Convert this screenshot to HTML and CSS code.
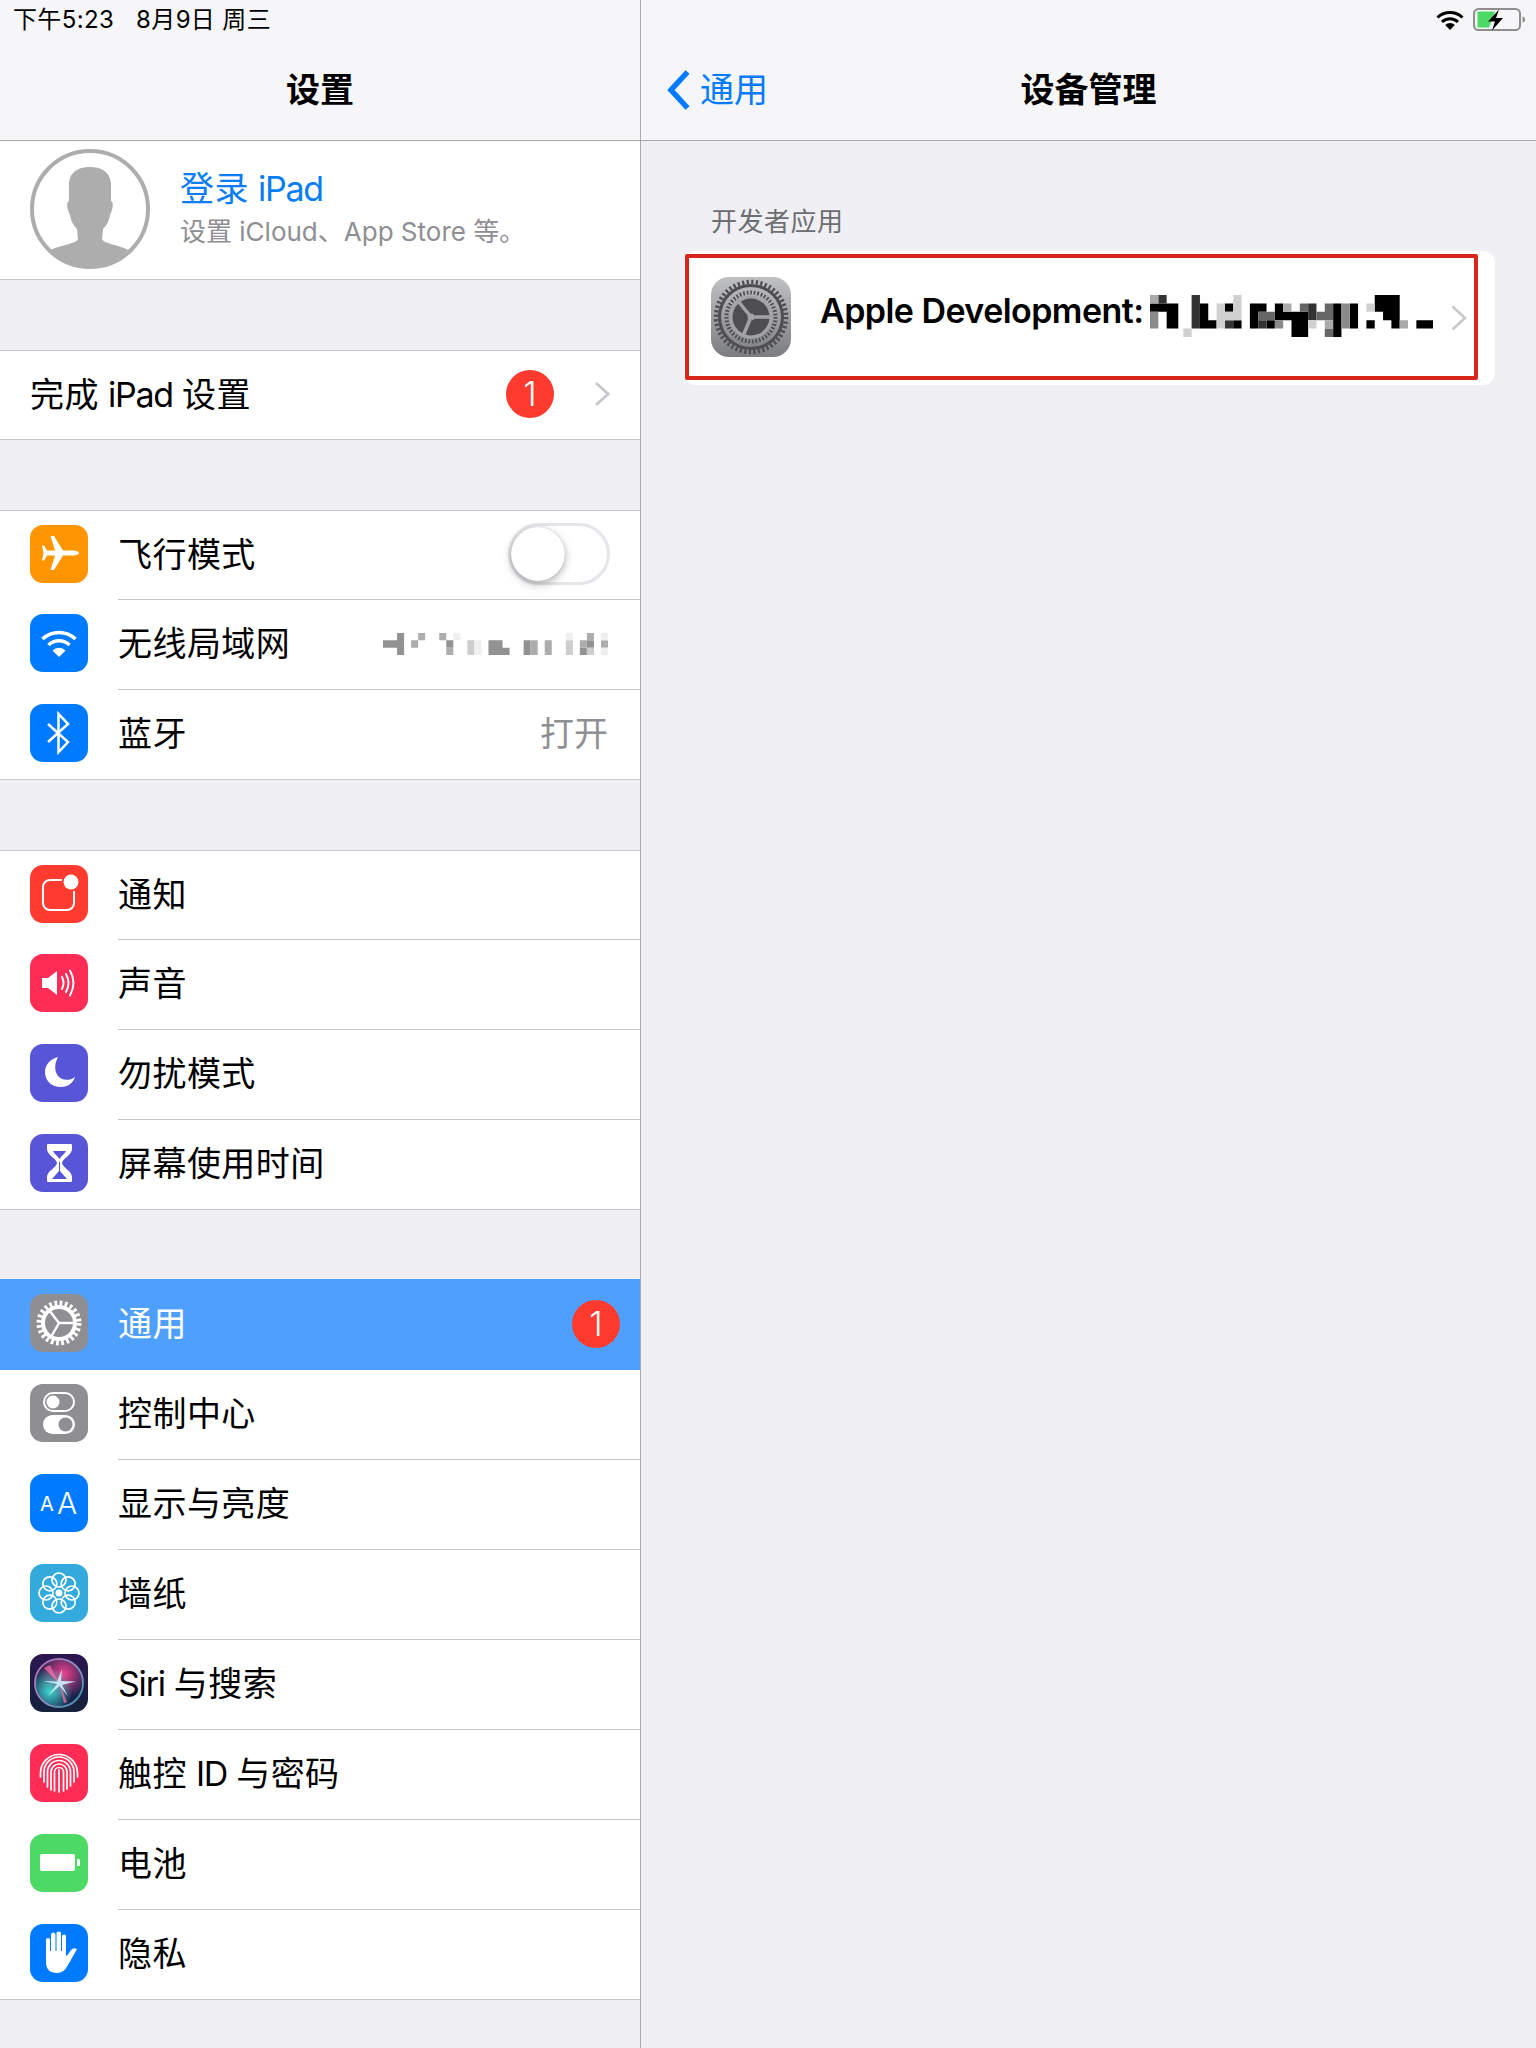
FILE: index.html
```html
<!DOCTYPE html>
<html lang="zh-CN">
<head>
    <meta charset="UTF-8">
    <title>设备管理</title>
    <link rel="stylesheet" href="styles.css">
</head>
<body>
<div class="ipad">
    <svg width="0" height="0" class="defs">
        <defs>
            <linearGradient id="gearBg" x1="0" y1="0" x2="0" y2="1">
                <stop offset="0" stop-color="#c0c1c3"/>
                <stop offset="1" stop-color="#7b7d80"/>
            </linearGradient>
            <linearGradient id="siriBg" x1="0" y1="0" x2="0" y2="1">
                <stop offset="0" stop-color="#2b1650"/>
                <stop offset="1" stop-color="#14223c"/>
            </linearGradient>
            <linearGradient id="siriRing" x1="0" y1="0" x2="1" y2="1">
                <stop offset="0" stop-color="#b35fb0"/>
                <stop offset="0.5" stop-color="#8f8fc0"/>
                <stop offset="1" stop-color="#2f8e9e"/>
            </linearGradient>
            <radialGradient id="siriPink" cx="0.6" cy="0.3" r="0.55">
                <stop offset="0" stop-color="#f0408f"/>
                <stop offset="1" stop-color="#f0408f" stop-opacity="0"/>
            </radialGradient>
            <radialGradient id="siriCyan" cx="0.3" cy="0.68" r="0.5">
                <stop offset="0" stop-color="#3fd6d0"/>
                <stop offset="1" stop-color="#3fd6d0" stop-opacity="0"/>
            </radialGradient>
        </defs>
    </svg>

    <!-- left column -->
    <aside class="sidebar">
        <header class="nav">
            <div class="status">
                <span>下午5:23</span>
                <span>8月9日 周三</span>
            </div>
            <div class="nav-bar">
                <span></span>
                <h1>设置</h1>
                <span></span>
            </div>
        </header>

        <section class="profile">
            <svg class="avatar" width="120" height="120" viewBox="0 0 120 120">
                <circle cx="60" cy="60" r="58" fill="#fff" stroke="#adadad" stroke-width="4"/>
                <path fill="#adadad" d="M60 18C70 18 81 22 81 36L81 52C84 53 83 60 80 66C79 72 77 76 73 80L72 90C74 95 90 96 98 101C88 112 74 119 60 119C46 119 32 112 21 101C30 96 46 95 48 90L47 80C43 76 41 72 40 66C37 60 36 53 39 52L39 36C39 22 50 18 60 18Z"/>
            </svg>
            <div class="profile-text">
                <div class="profile-name">登录 <span class="latin">iPad</span></div>
                <div class="profile-sub">设置 iCloud、App Store 等。</div>
            </div>
        </section>

        <section class="group">
            <div class="row">
                <div class="row-body no-icon">
                    <span class="label">完成 <span class="latin">iPad</span> 设置</span>
                    <span class="badge">1</span>
                    <svg class="chevron" width="16" height="26" viewBox="0 0 16 26"><path d="M2 2L14 13L2 24" fill="none" stroke="#c7c7cc" stroke-width="3"/></svg>
                </div>
            </div>
        </section>

        <section class="group">
            <div class="row">
                <svg class="icon" viewBox="0 0 58 58"><rect width="58" height="58" rx="13" fill="#ff9500"/>
                    <path fill="#fff" d="M49 28C49 26.5 46 25.5 43 25.5L33 25.5L24 11L20.5 11L25 25.5L17 25.5L14 20.5L12 20.5L13.5 28L12 35.5L14 35.5L17 30.5L25 30.5L20.5 45L24 45L33 30.5L43 30.5C46 30.5 49 29.5 49 28Z"/></svg>
                <div class="row-body">
                    <span class="label">飞行模式</span>
                    <span class="switch"><span class="knob"></span></span>
                </div>
            </div>
            <div class="row">
                <svg class="icon" viewBox="0 0 58 58"><rect width="58" height="58" rx="13" fill="#007aff"/>
                    <path fill="none" stroke="#fff" stroke-width="3.6" d="M12.5 25A24 24 0 0 1 45.500 25M18.500 31A15 15 0 0 1 39.500 31"/>
                    <path fill="#fff" d="M29 43L22.500 36.500A9 9 0 0 1 35.500 36.500Z"/></svg>
                <div class="row-body">
                    <span class="label">无线局域网</span>
                    <svg class="mosaic-wifi" width="225" height="22" viewBox="0 0 32 3" preserveAspectRatio="none">
                        <path fill="#929292" d="M0 1h3v1h-3zM2 0h1v1h-1zM2 2h1v1h-1zM9 1h1v1h-1zM15 1h2v2h-2zM17 2h1v1h-1zM20 1h1v2h-1zM29 1h1v1h-1zM28 2h1v1h-1z"/>
                        <path fill="#adadad" d="M5 0h1v1h-1zM4 1h1v1h-1zM8 0h1v1h-1zM9 2h1v1h-1zM21 1h1v2h-1zM23 1h1v2h-1zM28 1h1v1h-1zM29 0h1v1h-1zM31 1h1v1h-1z"/>
                        <path fill="#cdcdcd" d="M12 1h1v2h-1zM26 1h1v2h-1zM29 2h1v1h-1z"/>
                        <path fill="#efefef" d="M10 0h1v1h-1zM13 1h1v2h-1zM26 0h1v1h-1zM31 0h1v1h-1zM31 2h1v1h-1z"/>
                    </svg>
                </div>
            </div>
            <div class="row">
                <svg class="icon" viewBox="0 0 58 58"><rect width="58" height="58" rx="13" fill="#007aff"/>
                    <path fill="none" stroke="#fff" stroke-width="2.500" d="M18 20L38 38L28.500 48L28.500 10L38 20L18 38"/></svg>
                <div class="row-body">
                    <span class="label">蓝牙</span>
                    <span class="value">打开</span>
                </div>
            </div>
        </section>

        <section class="group">
            <div class="row">
                <svg class="icon" viewBox="0 0 58 58"><rect width="58" height="58" rx="13" fill="#ff3b30"/>
                    <rect x="13" y="15" width="31" height="30" rx="7" fill="none" stroke="#fff" stroke-width="2"/>
                    <circle cx="41" cy="17" r="9.500" fill="#ff3b30"/><circle cx="41" cy="17" r="7.500" fill="#fff"/></svg>
                <div class="row-body"><span class="label">通知</span></div>
            </div>
            <div class="row">
                <svg class="icon" viewBox="0 0 58 58"><rect width="58" height="58" rx="13" fill="#ff2d55"/>
                    <path fill="#fff" d="M12 24L18 24L27 17L27 41L18 34L12 34Z"/>
                    <path fill="none" stroke="#fff" stroke-width="2" stroke-linecap="round" d="M32 23Q35 29 32 35M36 20Q41 29 36 38M40 16.500Q47 29 40 41.500"/></svg>
                <div class="row-body"><span class="label">声音</span></div>
            </div>
            <div class="row">
                <svg class="icon" viewBox="0 0 58 58"><rect width="58" height="58" rx="13" fill="#5856d6"/>
                    <path fill="#fff" d="M28 13C20 15 15 21 15 28C15 37 22 43 31 43C38 43 43 39 45 33C41 36 36 36.500 32 35C25 32 23 22 28 13Z"/></svg>
                <div class="row-body"><span class="label">勿扰模式</span></div>
            </div>
            <div class="row">
                <svg class="icon" viewBox="0 0 58 58"><rect width="58" height="58" rx="13" fill="#5856d6"/>
                    <path fill="#fff" d="M18 10H41Q42 10 42 11V15C42 21 33 24 32 29C33 34 42 37 42 43V47Q42 48 41 48H18Q17 48 17 47V43C17 37 26 34 27 29C26 24 17 21 17 15V11Q17 10 18 10Z"/>
                    <path fill="#5856d6" d="M23 17H36C35 20 31 22 29.500 25C28 22 24 20 23 17ZM29 28H30V37L37 45H22L29 37Z"/></svg>
                <div class="row-body"><span class="label">屏幕使用时间</span></div>
            </div>
        </section>

        <section class="group group-general">
            <div class="row selected">
                <svg class="icon" viewBox="0 0 58 58"><rect width="58" height="58" rx="13" fill="#8e8e93"/>
                    <circle cx="29" cy="29" r="20" fill="none" stroke="#fff" stroke-width="5" stroke-dasharray="2.800 2.436"/>
                    <circle cx="29" cy="29" r="16" fill="none" stroke="#fff" stroke-width="4"/>
                    <path fill="none" stroke="#fff" stroke-width="2.400" d="M29 29H45M29 29L19 16M29 29L21 43"/></svg>
                <div class="row-body">
                    <span class="label">通用</span>
                    <span class="badge">1</span>
                </div>
            </div>
            <div class="row">
                <svg class="icon" viewBox="0 0 58 58"><rect width="58" height="58" rx="13" fill="#8e8e93"/>
                    <rect x="14" y="9" width="30" height="18" rx="9" fill="none" stroke="#fff" stroke-width="2"/>
                    <circle cx="23" cy="18" r="6.500" fill="#fff"/>
                    <rect x="13" y="31" width="32" height="19" rx="9.500" fill="#fff"/>
                    <circle cx="35.500" cy="40.500" r="7" fill="#8e8e93"/></svg>
                <div class="row-body"><span class="label">控制中心</span></div>
            </div>
            <div class="row">
                <svg class="icon" viewBox="0 0 58 58"><rect width="58" height="58" rx="13" fill="#007aff"/>
                    <text x="10" y="37" class="icon-text small">A</text>
                    <text x="27" y="40" class="icon-text big">A</text></svg>
                <div class="row-body"><span class="label">显示与亮度</span></div>
            </div>
            <div class="row">
                <svg class="icon" viewBox="0 0 58 58"><rect width="58" height="58" rx="13" fill="#34aadc"/>
                    <g fill="none" stroke="#fff" stroke-width="1.700">
                        <circle cx="29" cy="16" r="7"/><circle cx="29" cy="42" r="7"/>
                        <circle cx="16" cy="29" r="7"/><circle cx="42" cy="29" r="7"/>
                        <circle cx="19.800" cy="19.800" r="7"/><circle cx="38.200" cy="19.800" r="7"/>
                        <circle cx="19.800" cy="38.200" r="7"/><circle cx="38.200" cy="38.200" r="7"/>
                    </g>
                    <circle cx="29" cy="29" r="3.500" fill="#fff"/></svg>
                <div class="row-body"><span class="label">墙纸</span></div>
            </div>
            <div class="row">
                <svg class="icon" viewBox="0 0 58 58"><rect width="58" height="58" rx="13" fill="url(#siriBg)"/>
                    <circle cx="29" cy="29" r="24" fill="#15224a" stroke="url(#siriRing)" stroke-width="2"/>
                    <circle cx="29" cy="29" r="23" fill="url(#siriPink)"/>
                    <circle cx="29" cy="29" r="23" fill="url(#siriCyan)"/>
                    <path fill="#ff6fa8" opacity=".7" d="M29 29L37 48L34 49ZM29 29L14 14L20 11Z"/>
                    <path fill="#cfeefa" opacity=".9" d="M32 15L31 27L46 27.500L32 31L38 42L29.500 32L18 42L27 30L13 27L27 27.500Z"/></svg>
                <div class="row-body"><span class="label"><span class="latin">Siri</span> 与搜索</span></div>
            </div>
            <div class="row">
                <svg class="icon" viewBox="0 0 58 58"><rect width="58" height="58" rx="13" fill="#ff2d55"/>
                    <g fill="none" stroke="#fff" stroke-width="1.700" stroke-linecap="round">
                        <path d="M10.500 33V29A18.500 18.500 0 0 1 47.500 29V33"/>
                        <path d="M14 38V28A15 15 0 0 1 44 28V38"/>
                        <path d="M17.500 43V28A11.500 11.500 0 0 1 40.500 28V42"/>
                        <path d="M21 46V28A8 8 0 0 1 37 28V45"/>
                        <path d="M24.500 47V28A4.500 4.500 0 0 1 33.500 28V47"/>
                        <path d="M29 26V48"/>
                    </g></svg>
                <div class="row-body"><span class="label">触控 <span class="latin">ID</span> 与密码</span></div>
            </div>
            <div class="row">
                <svg class="icon" viewBox="0 0 58 58"><rect width="58" height="58" rx="13" fill="#4cd964"/>
                    <rect x="10" y="20" width="35" height="17" rx="2" fill="#fff"/>
                    <path fill="#fff" d="M47 25H48.500Q50 25 50 26.500V30.500Q50 32 48.500 32H47Z"/></svg>
                <div class="row-body"><span class="label">电池</span></div>
            </div>
            <div class="row">
                <svg class="icon" viewBox="0 0 58 58"><rect width="58" height="58" rx="13" fill="#007aff"/>
                    <path fill="#fff" d="M16 16Q16 14 18 14Q20 14 20 16V27H21V11Q21 8.500 23.500 8.500Q25.500 8.500 25.500 11V27H26.500V9Q26.500 7.500 28.500 7.500Q31 7.500 31 9V27H32V12Q32 10.500 34 10.500Q36 10.500 36 12V31L36.800 32L41 26Q44 23 47 25L38 41Q34 49 27 49Q16 49 16 38Z"/></svg>
                <div class="row-body"><span class="label">隐私</span></div>
            </div>
        </section>
    </aside>

    <!-- right column -->
    <main class="detail">
        <header class="nav">
            <div class="status status-right">
                <svg width="28" height="20" viewBox="0 0 28 20">
                    <path fill="none" stroke="#000" stroke-width="3" d="M1.500 7.500A18 18 0 0 1 26.500 7.500M6 12A11.500 11.500 0 0 1 22 12"/>
                    <path d="M14 20L9.200 15A7 7 0 0 1 18.800 15Z"/>
                </svg>
                <svg class="battery" width="53" height="24" viewBox="0 0 53 24">
                    <rect x="1" y="1" width="46" height="21" rx="4.500" fill="none" stroke="#8e8e8e" stroke-width="2"/>
                    <path fill="#4cd964" d="M4.500 3.500H22L16 19.500H4.500Z"/>
                    <path fill="#000" d="M26 1.500L15 13.500H22L19 22.500L30 10H23Z"/>
                    <path fill="#8e8e8e" d="M49.500 8.500C51.500 9 52 10 52 11.500C52 13 51.500 14 49.500 14.500Z"/>
                </svg>
            </div>
            <div class="nav-bar">
                <div class="back">
                    <svg width="24" height="42" viewBox="0 0 24 42"><path d="M21.500 3L5 21L21.500 39" fill="none" stroke="#007aff" stroke-width="5.500"/></svg>
                    <span class="back-text">通用</span>
                </div>
                <h1>设备管理</h1>
                <span></span>
            </div>
        </header>

        <div class="detail-content">
            <div class="section-label">开发者应用</div>
            <div class="card">
                <svg class="app-icon" width="80" height="80" viewBox="0 0 80 80">
                    <rect width="80" height="80" rx="18" fill="url(#gearBg)"/>
                    <g fill="none" stroke="#4e4e51">
                        <circle cx="40" cy="40" r="35" stroke-width="4.500" stroke-dasharray="2.200 2.380"/>
                        <circle cx="40" cy="40" r="31.500" stroke-width="3"/>
                        <circle cx="40" cy="40" r="24.500" stroke-width="4" stroke-dasharray="1.700 1.860"/>
                    </g>
                    <circle cx="40" cy="40" r="21.500" fill="#a2a3a5"/>
                    <circle cx="40" cy="40" r="18.500" fill="#4e4e51"/>
                    <path fill="none" stroke="#a2a3a5" stroke-width="3.500" d="M40 40H60M40 40L27 24M40 40L32 59"/>
                    <circle cx="40" cy="40" r="3.500" fill="#a2a3a5"/>
                </svg>
                <div class="dev-name">
                    <span class="dev-text">Apple Development:</span>
                    <svg class="mosaic-name" width="283" height="42" viewBox="0 0 34 5" preserveAspectRatio="none">
                        <path fill="#000" d="M0 1h3.400v1h-3.400zM2 2h1.400v2h-1.400zM6 1h1v3h-1zM7 3h1v1h-1zM9 1h1v1h-1zM10 3h1v1h-1zM12 1h2v1h-2zM12 2h1v2h-1zM15 1h1v2h-1zM14 3h1v1h-1zM16 2h3v1h-3zM17 3h2v2h-2zM22 1h1v4h-1zM24 1h1v3h-1zM26 3h1v1h-1zM27 0h3v2h-3zM28 2h2v1h-2zM29 3h1v1h-1zM32 3h2v1h-2z"/>
                        <path fill="#333" d="M1 0h1v1h-1zM5 0h1v4h-1zM9 3h1v1h-1zM13 3h1v1h-1zM19 1h1v2h-1z"/>
                        <path fill="#666" d="M18 1h1v1h-1zM13 2h2v1h-2zM20 2h2v1h-2zM21 4h1v1h-1zM21 1h1v1h-1z"/>
                        <path fill="#8a8a8a" d="M0 2h1v2h-1zM23 1h1v3h-1zM15 3h1v1h-1z"/>
                        <path fill="#aaa" d="M0 0h1v1h-1zM16 1h1v1h-1zM30 3h1v1h-1zM21 3h1v1h-1z"/>
                        <path fill="#d0d0d0" d="M10 0h1v1h-1zM8 1h1v1h-1zM10 1h1v1h-1zM8 2h3v1h-3zM8 3h1v1h-1zM4 4h1v1h-1zM26 1h1v1h-1zM19 3h1v1h-1z"/>
                    </svg>
                </div>
                <svg class="chevron-thin" width="16" height="26" viewBox="0 0 16 26"><path d="M1.500 1.500L14 13L1.500 24.500" fill="none" stroke="#c7c7cc" stroke-width="2.500"/></svg>
                <div class="highlight"></div>
            </div>
        </div>
    </main>
</div>
</body>
</html>
```

FILE: styles.css
```css
* {
    box-sizing: border-box;
}
body {
    margin: 0;
    font-family: "Inter", "Noto Sans CJK SC", sans-serif;
    color: #000;
    background: #efeff4;
}
.defs {
    position: absolute;
}
.ipad {
    display: flex;
    width: 1536px;
    height: 2048px;
    overflow: hidden;
}
.latin {
    letter-spacing: -1.2px;
}

/* top bars */
.nav {
    height: 141px;
    background: #f6f6f8;
    border-bottom: 1px solid #a9a9ac;
}
.status {
    display: flex;
    align-items: center;
    gap: 22px;
    height: 40px;
    padding-left: 13px;
    font-size: 24px;
    letter-spacing: 0.35px;
    line-height: 40px;
}
.status-right {
    justify-content: flex-end;
    gap: 9px;
    padding: 0 10px 0 0;
}
.nav-bar {
    display: grid;
    grid-template-columns: 1fr auto 1fr;
    align-items: center;
    height: 100px;
}
.nav-bar h1 {
    margin: 0;
    font-size: 34px;
    font-weight: 600;
    line-height: 40px;
}
.back {
    display: flex;
    align-items: center;
    gap: 10px;
    padding-left: 25px;
    color: #007aff;
    font-size: 34px;
}
.back-text {
    margin-bottom: 5px;
}

/* sidebar */
.sidebar {
    width: 641px;
    flex-shrink: 0;
    border-right: 1px solid #a9a9ac;
}
.profile {
    display: flex;
    align-items: center;
    height: 139px;
    padding-left: 30px;
    background: #fff;
    border-bottom: 1px solid #c8c7cc;
}
.avatar {
    margin-bottom: 3px;
}
.profile-text {
    margin-left: 30px;
}
.profile-name {
    font-size: 34px;
    letter-spacing: 0.45px;
    word-spacing: -1px;
    line-height: 44px;
    color: #0a7df5;
}
.profile-sub {
    font-size: 26px;
    line-height: 42px;
    color: #8e8e93;
}
.group {
    margin-top: 70px;
    background: #fff;
    border-top: 1px solid #c8c7cc;
    border-bottom: 1px solid #c8c7cc;
}
.group-general {
    margin-top: 69px;
    border-top: 0;
}
.row {
    display: flex;
    align-items: center;
    height: 90px;
    padding-left: 30px;
}
.row:first-child,
.row:last-child {
    height: 89px;
}
.row:only-child {
    height: 88px;
}
.row.selected {
    height: 91px;
    background: #4f9fff;
    color: #fff;
}
.icon {
    width: 58px;
    height: 58px;
    flex-shrink: 0;
    margin-bottom: 4px;
}
.row-body {
    display: flex;
    align-items: center;
    flex: 1;
    align-self: stretch;
    margin-left: 30px;
    padding-right: 32px;
    padding-bottom: 1px;
    border-bottom: 1px solid #c8c7cc;
}
.row-body.no-icon {
    margin-left: 0;
    padding-right: 30px;
}
.row:last-child .row-body,
.row.selected .row-body {
    border-bottom: 0;
}
.row.selected .row-body {
    padding-right: 20px;
}
.label {
    flex: 1;
    font-size: 34px;
    letter-spacing: 0.45px;
    word-spacing: -1px;
    line-height: 40px;
}
.value {
    font-size: 34px;
    line-height: 40px;
    color: #8e8e93;
}
.badge {
    width: 48px;
    height: 48px;
    margin-bottom: 1px;
    border-radius: 50%;
    background: #ff3b30;
    color: #fff;
    font-size: 34px;
    font-weight: 300;
    line-height: 48px;
    text-align: center;
}
.chevron {
    margin-left: 40px;
    margin-bottom: 1px;
}
.icon-text {
    fill: #fff;
    font-family: "Inter", sans-serif;
}
.icon-text.small {
    font-size: 20px;
}
.icon-text.big {
    font-size: 30px;
    font-weight: 300;
}
.switch {
    width: 102px;
    height: 62px;
    margin-right: -2px;
    margin-bottom: 2px;
    padding: 4px 3px;
    border: 3px solid #e5e5ea;
    border-radius: 31px;
}
.knob {
    display: block;
    width: 54px;
    height: 54px;
    margin: -3px 0 0 -3px;
    border-radius: 50%;
    background: #fff;
    box-shadow: 0 3px 8px rgba(0, 0, 0, 0.3), 0 0 1px rgba(0, 0, 0, 0.3);
}
.mosaic-wifi,
.mosaic-name {
    filter: blur(0.5px);
}
.mosaic-name {
    margin-bottom: 4px;
}

/* detail pane */
.detail {
    flex: 1;
}
.detail-content {
    padding: 0 41px 0 43px;
}
.section-label {
    height: 110px;
    padding: 64px 0 0 27px;
    font-size: 26px;
    letter-spacing: 0.5px;
    line-height: 34px;
    color: #6d6d72;
}
.card {
    position: relative;
    display: flex;
    align-items: center;
    height: 134px;
    padding-left: 27px;
    background: #fff;
    border-radius: 12px;
}
.app-icon {
    flex-shrink: 0;
    margin-bottom: 2px;
}
.dev-name {
    display: flex;
    align-items: center;
    margin-left: 29px;
    white-space: nowrap;
}
.dev-text {
    width: 330px;
    margin-bottom: 14px;
    font-size: 34px;
    font-weight: 600;
    letter-spacing: -0.55px;
    line-height: 40px;
}
.chevron-thin {
    position: absolute;
    right: 28px;
    top: 54px;
}
.highlight {
    position: absolute;
    left: 1px;
    top: 3px;
    right: 17px;
    bottom: 5px;
    border: 4px solid #d9261c;
    border-radius: 2px;
}
```
